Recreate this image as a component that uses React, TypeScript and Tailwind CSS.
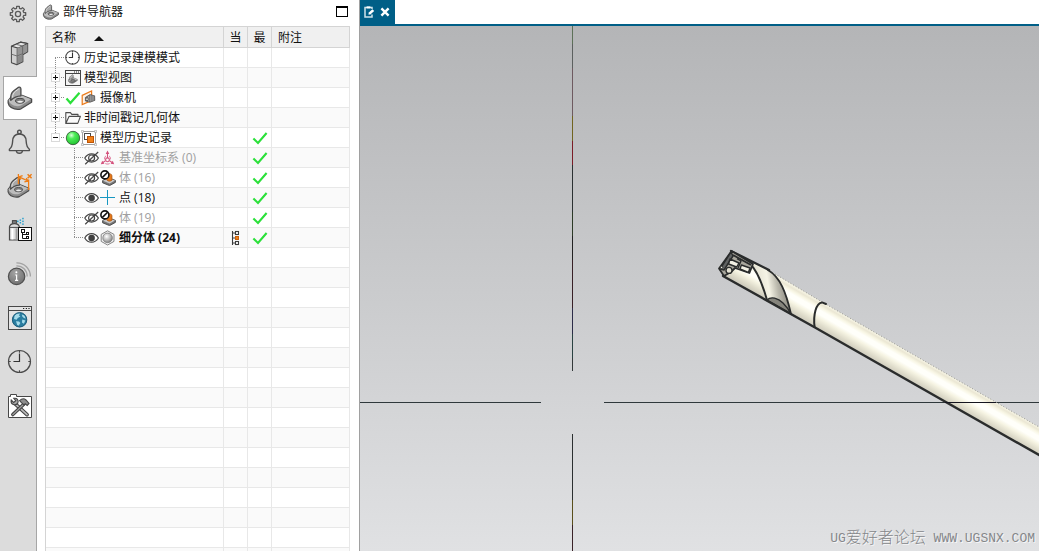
import React from "react";

type IconProps = { className?: string };

/* ---------- shared drawings ---------- */

function Bracket() {
  return (
    <g stroke="#4a4a4a" strokeWidth="1.3" strokeLinejoin="round">
      <path d="M2.2 16.5 C4 13.5 5.5 12.5 7 12 L16 11.4 L25.6 15.2 L25.6 18.2 L15 24.8 C11 26.2 5.5 24.8 3.2 21.6 C2.2 20 1.8 18.2 2.2 16.5Z" fill="#8b8b8b" />
      <path d="M2.6 16.6 C4.5 13 7 11.5 10 11 L16 11.6 L25 15.3 L15 21.6 C10 23.4 4 21 2.6 16.6Z" fill="#bdbdbd" stroke="none" />
      <path d="M4.8 16.4 C4.2 12 5.2 8.8 7.8 6.8 L12.2 3.4 C13.6 2.6 14.9 3.2 14.9 5 L14.9 11.8 C10.6 12 7.6 13.6 4.8 16.4Z" fill="#a9a9a9" />
      <path d="M6.6 13.6 C6.4 11 7.6 8.8 9.6 7.2 L12.8 4.8" fill="none" stroke="#e2e2e2" strokeWidth="1" />
      <ellipse cx="14" cy="16.8" rx="4.6" ry="2.4" fill="#7d7d7d" strokeWidth="1" />
      <path d="M11 17.8 C12.4 16.6 15.4 16.4 17.4 17.6 C15.8 19.2 12.4 19.2 11 17.8Z" fill="#ededed" stroke="none" />
    </g>
  );
}

function BracketIcon({ className = "size-7" }: IconProps) {
  return (
    <svg viewBox="0 0 28 28" className={className} aria-hidden="true">
      <Bracket />
    </svg>
  );
}

function ClockFace({ c, r, w }: { c: number; r: number; w: number }) {
  return (
    <g fill="none" stroke="#4a4a4a" strokeWidth={w}>
      <circle cx={c} cy={c} r={r} />
      <path d={`M${c} ${c - r * 0.72}V${c}H${c - r * 0.55}`} stroke="#333" />
      <path d={`M${c} ${c - r}v${r * 0.2}M${c} ${c + r}v${-r * 0.2}M${c - r} ${c}h${r * 0.2}M${c + r} ${c}h${-r * 0.2}`} />
    </g>
  );
}

/* ---------- resource bar icons ---------- */

function gearPath() {
  const pts: string[] = [];
  const teeth = 8;
  for (let i = 0; i < teeth; i++) {
    const a = (i / teeth) * Math.PI * 2 - Math.PI / 2;
    [[-0.25, 5.9], [-0.17, 7.8], [0.17, 7.8], [0.25, 5.9]].forEach(([d, r]) => {
      pts.push(`${(14 + Math.cos(a + d) * r).toFixed(2)} ${(14 + Math.sin(a + d) * r).toFixed(2)}`);
    });
  }
  return `M${pts.join("L")}Z`;
}

function GearIcon() {
  return (
    <svg viewBox="0 0 28 28" className="size-7" aria-hidden="true">
      <g fill="none" stroke="#5a5a5a" strokeWidth="1.3" strokeLinejoin="round">
        <path d={gearPath()} />
        <circle cx="14" cy="14" r="2.6" />
      </g>
    </svg>
  );
}

function BlocksIcon() {
  return (
    <svg viewBox="0 0 28 28" className="size-7" aria-hidden="true">
      <g stroke="#484848" strokeWidth="1.2" strokeLinejoin="round">
        <path d="M7.5 6.3 L16.5 2.2 L23.6 3.6 V11.8 L18.8 14.8 V21.8 L12.8 24.6 L7.5 22.6Z" fill="#a8a8a8" />
        <path d="M7.5 6.3 L16.5 2.2 L23.6 3.6 L14 8.2Z" fill="#e6e6e6" />
        <path d="M7.9 6.9 L13 8.4 V24 L7.9 22.2Z" fill="#d0d0d0" stroke="none" />
        <path d="M13 8.4 L23.4 4 V11.6 L13 17Z" fill="#949494" stroke="none" />
        <path d="M13 17 L18.6 14.6 V21.6 L13 24Z" fill="#8a8a8a" stroke="none" />
        <path d="M7.5 14.2 L13 16 L18.8 13.6 M12.4 4.4 L18.6 6 V14" fill="none" stroke="#666" strokeWidth=".9" />
        <path d="M13 8.4 V24.4" fill="none" stroke="#666" strokeWidth=".8" />
      </g>
    </svg>
  );
}

function BellIcon() {
  return (
    <svg viewBox="0 0 28 28" className="size-7" aria-hidden="true">
      <g fill="none" stroke="#505050" strokeWidth="1.4" strokeLinejoin="round">
        <circle cx="15.4" cy="4" r="1.8" />
        <path d="M5.4 22.6 V21.2 C8.4 19 8.4 17 8.6 13.4 C8.8 8.6 11 6 15.4 6 C19.8 6 22 8.6 22.2 13.4 C22.4 17 22.4 19 25.4 21.2 V22.6Z" />
        <path d="M12.4 23 C12.8 26 18 26 18.4 23" />
      </g>
    </svg>
  );
}

function DimensionedPartIcon() {
  return (
    <svg viewBox="0 0 28 28" className="size-7" aria-hidden="true">
      <g transform="translate(2.2 2.8) scale(.88)">
        <Bracket />
      </g>
      <g fill="none" stroke="#ee7d15" strokeWidth="1.3">
        <path d="M14.4 2 V12 M24.6 7.6 V18 M15 4.8 L24 9 M15 4.8 l3.6 -1.2 M15 4.8 l1.6 3 M24 9 l-3.6 .8 M24 9 l-1.8 -2.8" />
        <path d="M23.6 2.2 l4 4 M27.6 2.2 l-4 4" strokeWidth="1.5" />
      </g>
    </svg>
  );
}

function SprayIcon() {
  return (
    <svg viewBox="0 0 28 28" className="size-7" aria-hidden="true">
      <rect x="8.4" y="4.6" width="4" height="3" fill="#777" stroke="#444" />
      <path d="M5.5 24 V10.6 C6 8.6 7.6 7.6 10.4 7.6 C13.2 7.6 14.8 8.6 15.3 10.6 V24Z" fill="#dedede" stroke="#4a4a4a" strokeWidth="1.2" />
      <path d="M6 11.4 H15" stroke="#4a4a4a" />
      <path d="M8.4 12.4V23.4" stroke="#fff" strokeWidth="2" />
      <path d="M12.6 12.4V23.4" stroke="#9c9c9c" strokeWidth="2" />
      <g fill="#2aa0cc">
        <rect x="13" y="4.6" width="1.6" height="1.6" />
        <rect x="15.6" y="3.4" width="1.5" height="1.5" /><rect x="15.6" y="6" width="1.5" height="1.5" />
        <rect x="18.2" y="1.8" width="1.5" height="1.5" /><rect x="18.2" y="4.6" width="1.5" height="1.5" /><rect x="18.2" y="7.4" width="1.5" height="1.5" />
      </g>
      <rect x="14.5" y="11.5" width="13" height="13" fill="#fff" stroke="#111" />
      <g fill="none" stroke="#111">
        <rect x="17.5" y="13.5" width="3" height="3" />
        <path d="M18.5 17V22.5H22M18.5 18.5H22" />
        <rect x="22.5" y="16.5" width="2" height="2" /><rect x="22.5" y="20.5" width="2" height="2" />
      </g>
    </svg>
  );
}

function InfoIcon() {
  return (
    <svg viewBox="0 0 28 28" className="size-7" aria-hidden="true">
      <defs>
        <radialGradient id="info" cx=".4" cy=".3" r=".8">
          <stop offset="0" stopColor="#a2a2a2" /><stop offset="1" stopColor="#6c6c6c" />
        </radialGradient>
      </defs>
      <circle cx="12.6" cy="16.4" r="8.2" fill="url(#info)" stroke="#505050" strokeWidth="1.2" />
      <circle cx="12.4" cy="12.2" r="1" fill="#fff" />
      <path d="M11.2 15 H12.6 V20.2 M11 20.4 H14.2" fill="none" stroke="#fff" strokeWidth="1.2" />
      <g fill="none" stroke="#a3a3a3" strokeWidth="1.3">
        <path d="M12.4 5.8 C18.6 5.6 23.2 10.4 23.2 16.6" />
        <path d="M12.4 2.8 C20.4 2.6 26.4 8.8 26.4 16.6" />
      </g>
    </svg>
  );
}

function GlobeWindowIcon() {
  return (
    <svg viewBox="0 0 28 28" className="size-7" aria-hidden="true">
      <rect x="4.5" y="2.5" width="23" height="23" fill="#e4e4e4" stroke="#474747" />
      <path d="M5 6.5 H27" stroke="#474747" />
      <path d="M19 4.5h1.2M21.8 4.5h1.2M24.4 4.5h1.2" stroke="#222" strokeWidth="1.2" />
      <circle cx="15.6" cy="15.8" r="7.4" fill="#2a7da0" />
      <g fill="#a5dbea">
        <path d="M10.6 11.6 L13.4 9.4 L16 9.6 L15 11.4 L16.4 12.6 L13.8 14 L12.6 15.8 L10 15Z" />
        <path d="M17.8 10.4 L20.4 11.6 L21.8 14.4 L19.8 14 L18.4 12.6Z" />
        <path d="M12 17.2 L15 17.4 L16.4 19 L14.6 21.8 L13 20.4Z" />
        <path d="M18.2 15.6 L21.4 16.4 L19.8 19.8 L18 18.6Z" />
      </g>
      <circle cx="15.6" cy="15.8" r="7.2" fill="none" stroke="#1d5d7b" />
    </svg>
  );
}

function HistoryIcon() {
  return (
    <svg viewBox="0 0 28 28" className="size-7" aria-hidden="true">
      <g transform="translate(1.5 -.5)"><ClockFace c={14} r={11} w={1.2} /></g>
    </svg>
  );
}

function ToolsIcon() {
  return (
    <svg viewBox="0 0 28 28" className="size-7" aria-hidden="true">
      <path d="M4.5 25.5 V4.5 H6.5 V2.5 H12.5 V4.5 H27.5 V25.5Z" fill="#fff" stroke="#474747" />
      <path d="M11.8 12.4 L23 22.6" stroke="#444" strokeWidth="3.8" strokeLinecap="round" />
      <path d="M11.8 12.4 L23 22.6" stroke="#bcbcbc" strokeWidth="1.6" strokeLinecap="round" />
      <path d="M7.2 8 L9.6 10.4 L11.8 8.6 L9.8 6.4 C13 5.6 15 8.4 13.8 11.2 C11.6 14.2 6.2 12.8 7.2 8Z" fill="#a5a5a5" stroke="#444" strokeWidth="1.1" />
      <path d="M20 12 L8.8 22.6" stroke="#444" strokeWidth="3.4" strokeLinecap="round" />
      <path d="M20 12 L8.8 22.6" stroke="#a0a0a0" strokeWidth="1.3" strokeLinecap="round" />
      <path d="M15.6 8.6 C17.6 6.6 20.2 6.4 22 8 L25 11.4 L23.2 13.4 L21.2 11.8 L20 13 L17.2 10.4Z" fill="#8e8e8e" stroke="#444" strokeWidth="1.1" />
    </svg>
  );
}

/* ---------- tree icons ---------- */

const Small = ({ children }: { children: React.ReactNode }) => (
  <svg viewBox="0 0 16 16" className="size-4 shrink-0" aria-hidden="true">{children}</svg>
);

const icons: Record<string, React.ReactNode> = {
  clock: <Small><ClockFace c={7.5} r={6.8} w={1.1} /></Small>,
  window: (
    <Small>
      <rect x=".5" y=".5" width="15" height="15" fill="#f4f4f4" stroke="#444" />
      <path d="M1 3.5H15" stroke="#444" />
      <path d="M9 2h1M11 2h1M13 2h1" stroke="#222" />
      <g transform="translate(2.6 3.6) scale(.38)"><Bracket /></g>
      <path d="M4.6 11.2 C5.6 9 9 8.8 11.4 10.6 C10.6 13 6.4 13.8 4.6 11.2Z" fill="#555" fillOpacity=".6" />
    </Small>
  ),
  tick: <Small><path d="M1.5 8.5 L5.4 13 L14.5 2.8" fill="none" stroke="#2be03a" strokeWidth="2.2" /></Small>,
  camera: (
    <Small>
      <path d="M1.2 5.4 L10.6 1 V10.6 L1.2 14.6Z" fill="#fdf1e6" stroke="#ea7a1a" strokeWidth="1.2" />
      <path d="M4.4 7.4 L9 4.6 L13.6 5.8 L13.8 10.4 L9 12.2 L4.4 11Z" fill="#777" stroke="#444" strokeWidth=".7" />
      <path d="M7.6 6 V11.6 M9.8 5.2 V11.6 M12 5.6 V10.8" stroke="#b8b8b8" strokeWidth=".7" />
      <circle cx="6" cy="9.2" r="1.4" fill="#d8d8d8" stroke="#444" strokeWidth=".7" />
    </Small>
  ),
  folder: (
    <Small>
      <path d="M.8 13.4 V2.6 H5.4 L6.8 4.4 H13 V6.4 M.8 13.4 L4 6.4 H15.4 L12.8 13.4Z" fill="none" stroke="#4c4c4c" strokeWidth="1.1" strokeLinejoin="round" />
    </Small>
  ),
  ball: (
    <Small>
      <defs>
        <radialGradient id="ball" cx=".38" cy=".3" r=".75">
          <stop offset="0" stopColor="#d9ffd9" /><stop offset=".35" stopColor="#4cec56" /><stop offset="1" stopColor="#1fbf2f" />
        </radialGradient>
      </defs>
      <circle cx="8" cy="8" r="6.7" fill="url(#ball)" stroke="#2d4a30" strokeWidth=".8" />
    </Small>
  ),
  history: (
    <Small>
      <path d="M1.5 1.5H14.5V14.5H1.5Z" fill="none" stroke="#8a8a8a" strokeWidth=".8" />
      <path d="M.4 .4h2v2h-2ZM13.6 .4h2v2h-2ZM.4 13.6h2v2h-2ZM13.6 13.6h2v2h-2Z" fill="#fff" stroke="#8a8a8a" strokeWidth=".5" />
      <rect x="3.5" y="3.5" width="6" height="6" fill="#fff" stroke="#4a4a4a" />
      <rect x="6.5" y="6.5" width="6" height="6" fill="#f08019" stroke="#bd5506" />
    </Small>
  ),
  eye: (
    <Small>
      <path d="M.8 8 C4 2.2 11 2.2 14.4 8 C11 13.6 4 13.6 .8 8Z" fill="#fff" stroke="#454545" strokeWidth="1.2" />
      <circle cx="7.6" cy="8" r="3.3" fill="#3f3f3f" />
    </Small>
  ),
  hidden: (
    <Small>
      <path d="M.8 8 C4 2.4 11 2.4 14.4 8 C11 13.4 4 13.4 .8 8Z" fill="none" stroke="#454545" strokeWidth="1.2" />
      <circle cx="7.6" cy="8" r="3" fill="none" stroke="#454545" strokeWidth="1.2" />
      <path d="M1.2 14.2 L14.2 2" stroke="#454545" strokeWidth="1.2" />
    </Small>
  ),
  csys: (
    <Small>
      <g fill="none" stroke="#d4517c" strokeWidth="1.1">
        <path d="M7.5 2.6V8M5.6 10.6L2.6 12.8M9.4 10.6L12.4 12.8" />
        <circle cx="7.5" cy="9.8" r="1.9" />
        <path d="M4.6 9.4 C4.4 7.6 5 6.6 6 5.8 M10.4 9.4 C10.6 7.6 10 6.6 9 5.8 M5.4 13.6 C6.8 14.2 8.2 14.2 9.6 13.6" strokeWidth=".8" />
      </g>
      <path d="M7.5 .6 L9.3 4 H5.7Z M.8 14.2 L2.2 10.8 L4.4 13.8Z M14.2 14.2 L12.8 10.8 L10.6 13.8Z" fill="#d4517c" />
    </Small>
  ),
  body: (
    <Small>
      <path d="M2.6 10.6 L8 7.6 L15.4 10.4 V12.4 L9.6 15.6 L2.6 12.8Z" fill="#777" stroke="#444" strokeWidth=".9" />
      <path d="M3 10.8 L8 8 L15 10.6 L9.6 13.4Z" fill="#c8c8c8" />
      <path d="M6.8 5 C8 2.8 12 3.4 12 6 V10 C11 11.6 8.2 11.6 6.8 10Z" fill="#e5791c" stroke="#9a4a08" strokeWidth=".6" />
      <circle cx="4.9" cy="4.9" r="4" fill="#fff" stroke="#111" strokeWidth="1.6" />
      <path d="M7.6 2.2 L2.2 7.6" stroke="#111" strokeWidth="1.6" />
    </Small>
  ),
  point: <Small><path d="M7.5 0V15M0 7.5H15" stroke="#1797c2" /></Small>,
  subdivision: (
    <Small>
      <defs>
        <radialGradient id="sub" cx=".4" cy=".35" r=".7">
          <stop offset="0" stopColor="#fff" /><stop offset=".6" stopColor="#b4b4b4" /><stop offset="1" stopColor="#777" />
        </radialGradient>
      </defs>
      <path d="M7.6 .8 L14 4.4 V11.4 L7.6 15 L1.2 11.4 V4.4Z" fill="#f0f0f0" stroke="#858585" />
      <circle cx="7.6" cy="7.9" r="4.8" fill="url(#sub)" stroke="#808080" strokeWidth=".8" />
    </Small>
  ),
};

function CheckMark() {
  return (
    <svg viewBox="0 0 16 16" className="mx-auto block size-4" role="img" aria-label="✓">
      <path d="M1.4 8.4 L6 13 L14.6 3" fill="none" stroke="#2be03a" strokeWidth="2.1" />
    </svg>
  );
}

function CurrentFeature() {
  return (
    <svg viewBox="0 0 16 16" className="mx-auto block size-4" aria-hidden="true">
      <g fill="none" stroke="#3c3c3c" strokeWidth="1.1">
        <path d="M4.5 1V15M4.5 3H7M4.5 8H7M4.5 13H7" />
        <rect x="7.5" y="1.5" width="3" height="3" fill="#fff" /><rect x="7.5" y="11.5" width="3" height="3" fill="#fff" />
      </g>
      <rect x="7.5" y="6.5" width="3" height="3" fill="#f08019" stroke="#c9600d" />
    </svg>
  );
}

/* ---------- tree data ---------- */

type Row = {
  label: string;
  icons: string[];
  level: 1 | 2;
  toggle?: "+" | "-";
  first?: boolean;
  last?: boolean;
  dim?: boolean;
  bold?: boolean;
  current?: boolean;
  done?: boolean;
};

const rows: Row[] = [
  { label: "历史记录建模模式", icons: ["clock"], level: 1, first: true },
  { label: "模型视图", icons: ["window"], level: 1, toggle: "+" },
  { label: "摄像机", icons: ["tick", "camera"], level: 1, toggle: "+" },
  { label: "非时间戳记几何体", icons: ["folder"], level: 1, toggle: "+" },
  { label: "模型历史记录", icons: ["ball", "history"], level: 1, toggle: "-", last: true, done: true },
  { label: "基准坐标系 (0)", icons: ["hidden", "csys"], level: 2, dim: true, done: true },
  { label: "体 (16)", icons: ["hidden", "body"], level: 2, dim: true, done: true },
  { label: "点 (18)", icons: ["eye", "point"], level: 2, done: true },
  { label: "体 (19)", icons: ["hidden", "body"], level: 2, dim: true, done: true },
  { label: "细分体 (24)", icons: ["eye", "subdivision"], level: 2, last: true, bold: true, current: true, done: true },
];

function Branch({ row }: { row: Row }) {
  const x = row.level === 1 ? 9.5 : 28.5;
  const w = row.level === 1 ? 19 : 38;
  return (
    <svg width={w} height="19" className="shrink-0" aria-hidden="true">
      <g stroke="#8c8c8c" strokeDasharray="1 1">
        <path d={`M${x} ${row.first ? 10 : 0}V${row.last ? 10 : 19}`} />
        <path d={`M${x - 0.5} 9.5H${w - 1}`} />
      </g>
      {row.toggle && (
        <g>
          <rect x="5.5" y="5.5" width="8" height="8" fill="#fff" stroke="#d9d9d9" />
          <path d={row.toggle === "+" ? "M7 9.5H12M9.5 7V12" : "M7 9.5H12"} stroke="#111" />
        </g>
      )}
    </svg>
  );
}

const cell = "h-5 border-b border-r border-[#e8e8e8] p-0";
const head = "h-[22px] border-y border-r border-[#d4d4d4] bg-[#f0f0f0] p-0 pt-0.5 font-normal leading-4";

function PartNavigator() {
  const blanks = Array.from({ length: 60 }, (_, i) => i);
  return (
    <section className="flex w-[322px] shrink-0 flex-col bg-white">
      <header className="flex h-[26px] shrink-0 items-center pb-[3px] pl-[5px] pr-[11px]">
        <BracketIcon className="size-[18px]" />
        <h1 className="ml-[3px] flex-1 text-xs">部件导航器</h1>
        <button type="button" aria-label="最大化" className="h-[11px] w-3 border border-t-2 border-black" />
      </header>
      <div className="mx-2 mr-[9px] min-h-0 flex-1 overflow-hidden border-l border-[#d4d4d4]">
        <table className="w-full table-fixed border-separate border-spacing-0 text-xs">
          <colgroup>
            <col className="w-[178px]" /><col className="w-6" /><col className="w-6" /><col />
          </colgroup>
          <thead>
            <tr>
              <th className={`${head} text-left`}>
                <span className="flex items-center gap-[18px] pl-1.5">
                  名称
                  <svg viewBox="0 0 10 5" className="h-[5px] w-2.5" aria-hidden="true"><path d="M5 0L10 5H0Z" fill="#111" /></svg>
                </span>
              </th>
              <th className={head}>当</th>
              <th className={head}>最</th>
              <th className={`${head} text-left`}><span className="pl-1.5">附注</span></th>
            </tr>
          </thead>
          <tbody>
            {rows.map((row) => (
              <tr key={row.label} className="even:bg-[#fafafa]">
                <td className={cell}>
                  <div className="flex h-[19px] items-center overflow-hidden">
                    <Branch row={row} />
                    {row.icons.map((name) => <React.Fragment key={name}>{icons[name]}</React.Fragment>)}
                    <span className={`ml-[3px] whitespace-nowrap leading-5 ${row.dim ? "text-[#a0a0a0]" : "text-[#111]"} ${row.bold ? "font-bold" : ""}`}>
                      {row.label}
                    </span>
                  </div>
                </td>
                <td className={cell}>{row.current && <CurrentFeature />}</td>
                <td className={cell}>{row.done && <CheckMark />}</td>
                <td className={cell} />
              </tr>
            ))}
            {blanks.map((i) => (
              <tr key={i} className="even:bg-[#fafafa]">
                <td className={cell} /><td className={cell} /><td className={cell} /><td className={cell} />
              </tr>
            ))}
          </tbody>
        </table>
      </div>
    </section>
  );
}

/* ---------- resource bar ---------- */

const tools = [
  { label: "装配导航器", icon: <BlocksIcon /> },
  { label: "部件导航器", icon: <BracketIcon />, active: true },
  { label: "通知", icon: <BellIcon /> },
  { label: "PMI", icon: <DimensionedPartIcon /> },
  { label: "渲染", icon: <SprayIcon /> },
  { label: "信息", icon: <InfoIcon /> },
  { label: "浏览器", icon: <GlobeWindowIcon /> },
  { label: "历史记录", icon: <HistoryIcon /> },
  { label: "工具", icon: <ToolsIcon /> },
];

function ResourceBar() {
  return (
    <nav className="flex w-[37px] shrink-0 flex-col bg-[#dcdcdc]">
      <button type="button" aria-label="设置" className="flex h-8 shrink-0 items-center justify-center border-r border-[#a6a6a6] pb-1">
        <GearIcon />
      </button>
      {tools.map((t) => (
        <button
          key={t.label}
          type="button"
          aria-label={t.label}
          className={
            t.active
              ? "ml-[3px] flex h-11 shrink-0 items-center justify-center border-y border-l border-[#a6a6a6] bg-white pr-px"
              : "flex h-11 shrink-0 items-center justify-center border-r border-[#a6a6a6]"
          }
        >
          {t.icon}
        </button>
      ))}
      <div className="flex-1 border-r border-[#a6a6a6]" />
    </nav>
  );
}

/* ---------- graphics window ---------- */

const axisSegments = [
  { from: 26, to: 44, color: "#5d7158" },
  { from: 44, to: 68, color: "#5c605f" },
  { from: 68, to: 116, color: "#6e5a60" },
  { from: 116, to: 141, color: "#71641f" },
  { from: 141, to: 165, color: "#7b1c26" },
  { from: 165, to: 212, color: "#2b3132" },
  { from: 212, to: 236, color: "#2c3a26" },
  { from: 236, to: 260, color: "#222222" },
  { from: 260, to: 308, color: "#382026" },
  { from: 308, to: 334, color: "#2c2c48" },
  { from: 334, to: 358, color: "#2a4242" },
  { from: 358, to: 371, color: "#33393a" },
  { from: 434, to: 500, color: "#2b2f30" },
  { from: 500, to: 525, color: "#5a4f1c" },
  { from: 525, to: 551, color: "#3a2328" },
];

function Scene() {
  return (
    <svg viewBox="360 26 679 525" preserveAspectRatio="xMinYMin slice" className="absolute inset-0 size-full" role="img" aria-label="细分体 (24)">
      <defs>
        <linearGradient id="shaft" gradientUnits="userSpaceOnUse" x1="930" y1="364.5" x2="917.8" y2="385.7">
          <stop offset="0" stopColor="#f6f4e4" /><stop offset=".1" stopColor="#ebe7d4" />
          <stop offset=".2" stopColor="#f8f6e4" /><stop offset=".32" stopColor="#fffffa" />
          <stop offset=".48" stopColor="#fffffa" /><stop offset=".62" stopColor="#f6f4e3" />
          <stop offset=".85" stopColor="#dedbca" /><stop offset="1" stopColor="#cfccbe" />
        </linearGradient>
        <linearGradient id="flute" x1="0" y1=".4" x2="1" y2=".2">
          <stop offset="0" stopColor="#dedbcb" /><stop offset=".4" stopColor="#f5f3e5" />
          <stop offset=".62" stopColor="#bab8ac" /><stop offset="1" stopColor="#6f6e67" />
        </linearGradient>
      </defs>

      <g fill="none" shapeRendering="crispEdges">
        {axisSegments.map((s) => (
          <path key={s.from} d={`M572.5 ${s.from}V${s.to}`} stroke={s.color} />
        ))}
        <path d="M360 402.5H541M604 402.5H1039" stroke="#2f383b" />
      </g>

      <path d="M731 251 L768 270 L822 302 L1039 427 V455 L815 327.5 L723 276 L719 267Z" fill="url(#shaft)" />
      <path d="M775 274 L822 302 L1039 427" fill="none" stroke="#85857c" strokeWidth=".8" strokeDasharray="1 2" />
      <path d="M752 265 L768 270 C780 277 786 292 791 314 L767 300 C764 287 760 273 752 265Z" fill="url(#flute)" />
      <path d="M767 300 C771 296 778 298 783 303 C787 307 789 310 791 314Z" fill="#85847c" stroke="#2a2c2c" strokeWidth="1.4" />
      <g fill="none" stroke="#2a2c2c" strokeWidth="2.4" strokeLinecap="round" strokeLinejoin="round">
        <path d="M723 276 L815 327.5 L1039 455" />
        <path d="M750 264 C758 271 763 286 767 300" strokeWidth="2" />
        <path d="M768 270 C780 277 786 292 791 314" strokeWidth="1.8" />
        <path d="M731 251 L757 264 L769 270" />
        <path d="M814.6 327 C813 315 816 303 822 302.4 L826 304" strokeWidth="2" />
      </g>

      <g stroke="#2a2c2c" strokeLinejoin="round">
        <path d="M731.6 251 L753 264 L749.4 273 L735 268 L731 272 L724 276 L719 268.6Z" fill="#a9a79d" strokeWidth="1.8" />
        <path d="M731 252 L720 269 L724 270 L733 256Z" fill="#606262" strokeWidth="1.4" />
        <path d="M733 255 L751 265" fill="none" strokeWidth="2" />
        <path d="M730 259 L739 263 L736.6 267 L728.6 264Z" fill="#f2f0e4" strokeWidth="1.4" />
        <path d="M741.4 265 L750 268 L748.4 272.4 L740 269Z" fill="#f2f0e4" strokeWidth="1.4" />
        <path d="M737 258.6 L741 261 L738 268" fill="none" strokeWidth="1.4" />
        <circle cx="729" cy="270.4" r="3" fill="#e6e3d4" strokeWidth="1.4" />
        <circle cx="721.6" cy="267.4" r="1.2" fill="#f2f0e4" strokeWidth="1" />
      </g>
      <path d="M945 402.5H996" stroke="#15151f" shapeRendering="crispEdges" />
    </svg>
  );
}

function GraphicsWindow() {
  return (
    <main className="flex min-w-0 flex-1 flex-col border-l border-[#a0a0a0] bg-white">
      <div className="flex h-[26px] shrink-0 border-b-2 border-[#005f87]">
        <div className="flex w-[35px] items-center gap-1 bg-[#005f87] pl-1 text-white">
          <svg viewBox="0 0 11 12" className="h-3 w-[11px]" aria-hidden="true">
            <path d="M8 3V1.5H1V11H8V8.6" fill="none" stroke="#cfe3ea" strokeWidth="1.5" />
            <path d="M2.6 .4H6.4V2.4H2.6Z" fill="#fff" />
            <path d="M4.4 8.6 L4.8 6.6 L8.4 3.2 L10.2 5 L6.4 8.4Z" fill="#fff" />
          </svg>
          <button type="button" aria-label="关闭" className="flex size-3 items-center justify-center">
            <svg viewBox="0 0 10 10" className="size-2.5" aria-hidden="true"><path d="M1.4 1.4L8.6 8.6M8.6 1.4L1.4 8.6" stroke="#fff" strokeWidth="2.4" /></svg>
          </button>
        </div>
      </div>
      <div className="relative min-h-0 flex-1 overflow-hidden bg-linear-to-b from-[#b4b5b7] to-[#e0e1e3]">
        <Scene />
        <p className="absolute bottom-0 right-1 flex items-center whitespace-pre font-['Liberation_Mono','Noto_Sans_CJK_SC',monospace] text-[13px] leading-6 text-[#85878a] [text-shadow:1px_1px_0_#f6f6f7]">
          UG<span className="text-base font-light leading-6">爱好者论坛</span> WWW.UGSNX.COM
        </p>
      </div>
    </main>
  );
}

export default function App() {
  return (
    <div className="flex h-screen overflow-hidden bg-white font-['Open_Sans','Noto_Sans_CJK_SC',sans-serif] text-[#111]">
      <ResourceBar />
      <PartNavigator />
      <GraphicsWindow />
    </div>
  );
}
